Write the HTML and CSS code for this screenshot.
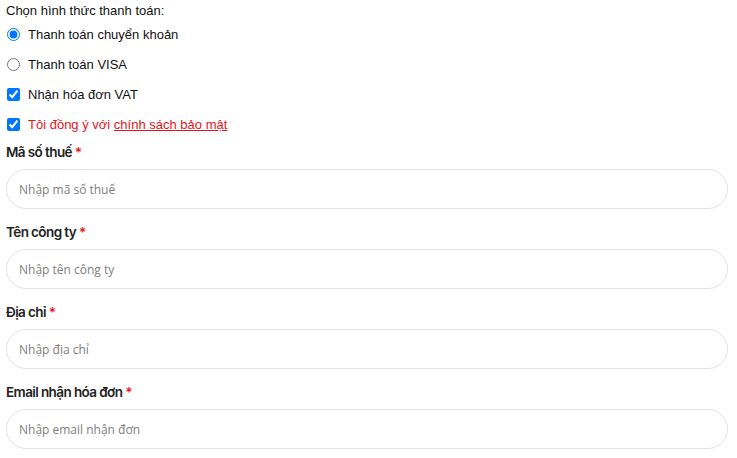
FILE: index.html
```html
<!DOCTYPE html>
<html lang="vi">
<head>
  <meta charset="UTF-8">
  <meta name="viewport" content="width=device-width, initial-scale=1.0">
  <title>Thanh toán</title>
  <link rel="stylesheet" href="styles.css">
</head>
<body>
  <div class="checkout-form">
    <p class="method-title">Chọn hình thức thanh toán:</p>
    <label class="option">
      <input type="radio" name="method" checked>
      <span>Thanh toán chuyển khoản</span>
    </label>
    <label class="option">
      <input type="radio" name="method">
      <span>Thanh toán VISA</span>
    </label>
    <label class="option">
      <input type="checkbox" checked>
      <span>Nhận hóa đơn VAT</span>
    </label>
    <label class="option agree">
      <input type="checkbox" checked>
      <span>Tôi đồng ý với <a href="#">chính sách bảo mật</a></span>
    </label>

    <div class="field">
      <label for="taxCode">Mã số thuế <span class="req">*</span></label>
      <input id="taxCode" type="text" placeholder="Nhập mã số thuế">
    </div>
    <div class="field">
      <label for="company">Tên công ty <span class="req">*</span></label>
      <input id="company" type="text" placeholder="Nhập tên công ty">
    </div>
    <div class="field">
      <label for="address">Địa chỉ <span class="req">*</span></label>
      <input id="address" type="text" placeholder="Nhập địa chỉ">
    </div>
    <div class="field">
      <label for="invoiceEmail">Email nhận hóa đơn <span class="req">*</span></label>
      <input id="invoiceEmail" type="text" placeholder="Nhập email nhận đơn">
    </div>
  </div>
</body>
</html>
```

FILE: styles.css
```css
body {
  margin: 0;
  background: #fff;
  font-family: "Liberation Sans", Arial, sans-serif;
  color: #111;
}

.checkout-form {
  width: 722px;
  padding: 2px 0 0 6px;
}

.method-title {
  margin: 0;
  font-size: 13px;
  line-height: 17px;
}

.option {
  display: flex;
  align-items: center;
  height: 30px;
  font-size: 13px;
  cursor: pointer;
}

.option input {
  margin: 0 8px 0 1px;
  width: 13px;
  height: 13px;
}

.agree {
  color: #e5141b;
}

.agree a {
  color: #e5141b;
}

.field {
  margin-top: 5px;
}

.field + .field {
  margin-top: 15px;
}

.field label {
  display: block;
  font-family: Inter, "Liberation Sans", sans-serif;
  font-weight: 600;
  font-size: 13.5px;
  letter-spacing: -0.6px;
  line-height: 17px;
  margin-bottom: 8px;
  color: #222;
}

.req {
  color: #e5141b;
}

.field input {
  box-sizing: border-box;
  width: 722px;
  height: 40px;
  border: 1px solid #e2e2e2;
  border-radius: 20px;
  padding: 0 12px;
  font-family: "Open Sans", sans-serif;
  font-size: 12px;
  color: #333;
  outline: none;
}

.field input::placeholder {
  color: #808080;
}
```
